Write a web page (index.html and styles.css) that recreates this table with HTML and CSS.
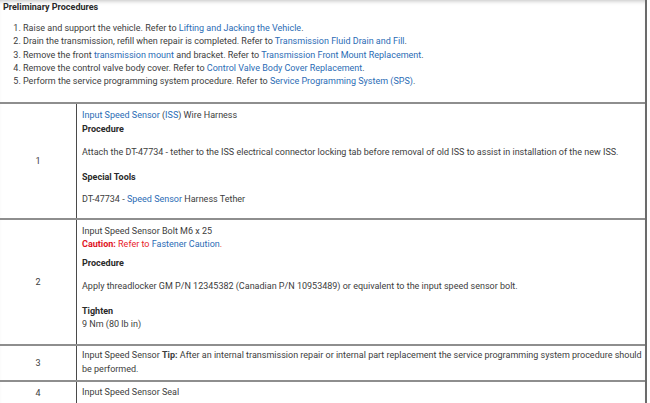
FILE: index.html
```html
<!DOCTYPE html>
<html>
<head>
<meta charset="utf-8">
<link rel="stylesheet" href="styles.css">
</head>
<body>
<div class="page">
  <h3 class="heading">Preliminary Procedures</h3>
  <ol class="steps">
    <li>Raise and support the vehicle. Refer to <a>Lifting and Jacking the Vehicle</a>.</li>
    <li>Drain the transmission, refill when repair is completed. Refer to <a>Transmission Fluid Drain and Fill</a>.</li>
    <li>Remove the front <a>transmission mount</a> and bracket. Refer to <a>Transmission Front Mount Replacement</a>.</li>
    <li>Remove the control valve body cover. Refer to <a>Control Valve Body Cover Replacement</a>.</li>
    <li>Perform the service programming system procedure. Refer to <a>Service Programming System (SPS)</a>.</li>
  </ol>
  <table class="proc">
    <tr class="r1">
      <td class="num">1</td>
      <td class="body">
        <div class="line"><a>Input Speed Sensor</a> (<a>ISS</a>) Wire Harness</div>
        <div class="line sub">Procedure</div>
        <div class="line para">Attach the DT-47734 - tether to the ISS electrical connector locking tab before removal of old ISS to assist in installation of the new ISS.</div>
        <div class="line sub sec">Special Tools</div>
        <div class="line para last1">DT-47734 - <a>Speed Sensor</a> Harness Tether</div>
      </td>
    </tr>
    <tr class="r2">
      <td class="num">2</td>
      <td class="body">
        <div class="line">Input Speed Sensor Bolt M6 x 25</div>
        <div class="line caution"><b>Caution:</b> Refer to <a>Fastener Caution</a>.</div>
        <div class="line sub proc2">Procedure</div>
        <div class="line para">Apply threadlocker GM P/N 12345382 (Canadian P/N 10953489) or equivalent to the input speed sensor bolt.</div>
        <div class="line sub sec">Tighten</div>
        <div class="line last2">9 Nm (80 lb in)</div>
      </td>
    </tr>
    <tr class="r3">
      <td class="num">3</td>
      <td class="body">
        <div class="line">Input Speed Sensor <b>Tip:</b> After an internal transmission repair or internal part replacement the service programming system procedure should be performed.</div>
      </td>
    </tr>
    <tr class="r4">
      <td class="num">4</td>
      <td class="body">
        <div class="line">Input Speed Sensor Seal</div>
      </td>
    </tr>
  </table>
</div>
</body>
</html>
```
FILE: styles.css
```css
html, body {
  margin: 0;
  padding: 0;
  background: #fff;
}
body {
  font-family: Roboto, "Liberation Sans", Arial, sans-serif;
  font-size: 9px;
  color: #3d3d3d;
  overflow: hidden;
}
.page {
  width: 645px;
  height: 403px;
  border-right: 2px solid #6b6b6b;
  box-shadow: inset 0 4px 4px -3px rgba(0,0,0,0.25);
  overflow: hidden;
}
a {
  color: #2b6cb5;
}
.heading {
  margin: 0;
  padding: 0 0 0 3px;
  font-size: 9px;
  line-height: 14px;
  font-weight: 700;
  color: #2a2a2a;
}
.steps {
  margin: 8px 0 0 0;
  padding-left: 23px;
  line-height: 13.3px;
}
.proc {
  margin-top: 14px;
  border-collapse: collapse;
  width: 647px;
}
.proc td {
  border-top: 2px solid #8e8e8e;
  border-bottom: 2px solid #8e8e8e;
  padding: 0;
}
.num {
  width: 76px;
  text-align: center;
  vertical-align: middle;
  border-right: 1px solid #4a4a4a;
}
.body {
  padding: 5px 4px 0 5px !important;
  vertical-align: top;
}
.line {
  line-height: 13.3px;
}
.sub {
  font-weight: 700;
  color: #2a2a2a;
}
.para {
  margin-top: 10px;
}
.sec {
  margin-top: 11.5px;
}
.last1 {
  margin-top: 9px;
  margin-bottom: 11.5px;
}
.caution {
  color: #e8202a;
}
.caution b {
  color: #e0141e;
}
.proc2 {
  margin-top: 5px;
}
.last2 {
  margin-bottom: 13px;
}
.r3 .body {
  padding-top: 3px !important;
  padding-bottom: 4px !important;
}
.r4 .body {
  padding-top: 4px !important;
  padding-bottom: 6px !important;
}
```
